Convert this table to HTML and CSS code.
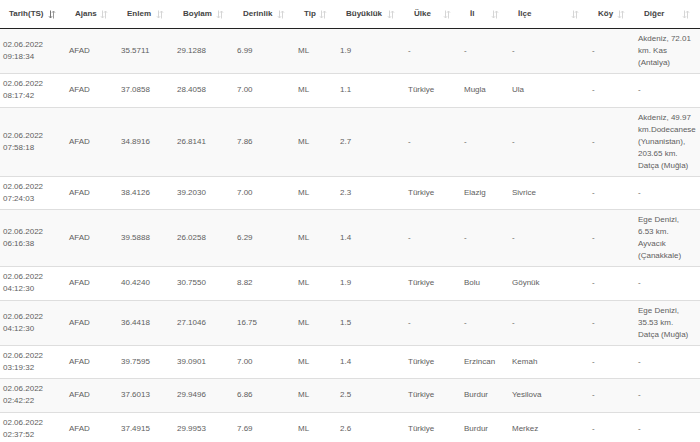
FILE: index.html
```html
<!DOCTYPE html>
<html lang="tr">
<head>
<meta charset="utf-8">
<title>Son Depremler</title>
<link rel="stylesheet" href="styles.css">
</head>
<body>
<table class="quakes">
  <colgroup>
    <col class="c-date"><col class="c-agency"><col class="c-lat"><col class="c-lon">
    <col class="c-depth"><col class="c-type"><col class="c-mag"><col class="c-country">
    <col class="c-city"><col class="c-district"><col class="c-village"><col class="c-other">
  </colgroup>
  <thead>
    <tr>
      <th><span class="th-in"><span>Tarih(TS)</span><svg class="sort sort-active" viewBox="0 0 8 9" width="8" height="9"><path class="a-down" d="M2.5 0.5V8M1 6.3L2.5 8L4 6.3"/><path class="a-up" d="M5.5 8.5V1M4 2.7L5.5 1L7 2.7"/></svg></span></th>
      <th><span class="th-in"><span>Ajans</span><svg class="sort" viewBox="0 0 8 9" width="8" height="9"><path class="a-down" d="M2.5 0.5V8M1 6.3L2.5 8L4 6.3"/><path class="a-up" d="M5.5 8.5V1M4 2.7L5.5 1L7 2.7"/></svg></span></th>
      <th><span class="th-in"><span>Enlem</span><svg class="sort" viewBox="0 0 8 9" width="8" height="9"><path class="a-down" d="M2.5 0.5V8M1 6.3L2.5 8L4 6.3"/><path class="a-up" d="M5.5 8.5V1M4 2.7L5.5 1L7 2.7"/></svg></span></th>
      <th><span class="th-in"><span>Boylam</span><svg class="sort" viewBox="0 0 8 9" width="8" height="9"><path class="a-down" d="M2.5 0.5V8M1 6.3L2.5 8L4 6.3"/><path class="a-up" d="M5.5 8.5V1M4 2.7L5.5 1L7 2.7"/></svg></span></th>
      <th><span class="th-in"><span>Derinlik</span><svg class="sort" viewBox="0 0 8 9" width="8" height="9"><path class="a-down" d="M2.5 0.5V8M1 6.3L2.5 8L4 6.3"/><path class="a-up" d="M5.5 8.5V1M4 2.7L5.5 1L7 2.7"/></svg></span></th>
      <th><span class="th-in"><span>Tip</span><svg class="sort" viewBox="0 0 8 9" width="8" height="9"><path class="a-down" d="M2.5 0.5V8M1 6.3L2.5 8L4 6.3"/><path class="a-up" d="M5.5 8.5V1M4 2.7L5.5 1L7 2.7"/></svg></span></th>
      <th><span class="th-in"><span>Büyüklük</span><svg class="sort" viewBox="0 0 8 9" width="8" height="9"><path class="a-down" d="M2.5 0.5V8M1 6.3L2.5 8L4 6.3"/><path class="a-up" d="M5.5 8.5V1M4 2.7L5.5 1L7 2.7"/></svg></span></th>
      <th><span class="th-in"><span>Ülke</span><svg class="sort" viewBox="0 0 8 9" width="8" height="9"><path class="a-down" d="M2.5 0.5V8M1 6.3L2.5 8L4 6.3"/><path class="a-up" d="M5.5 8.5V1M4 2.7L5.5 1L7 2.7"/></svg></span></th>
      <th><span class="th-in"><span>İl</span><svg class="sort" viewBox="0 0 8 9" width="8" height="9"><path class="a-down" d="M2.5 0.5V8M1 6.3L2.5 8L4 6.3"/><path class="a-up" d="M5.5 8.5V1M4 2.7L5.5 1L7 2.7"/></svg></span></th>
      <th><span class="th-in"><span>İlçe</span><svg class="sort" viewBox="0 0 8 9" width="8" height="9"><path class="a-down" d="M2.5 0.5V8M1 6.3L2.5 8L4 6.3"/><path class="a-up" d="M5.5 8.5V1M4 2.7L5.5 1L7 2.7"/></svg></span></th>
      <th><span class="th-in"><span>Köy</span><svg class="sort" viewBox="0 0 8 9" width="8" height="9"><path class="a-down" d="M2.5 0.5V8M1 6.3L2.5 8L4 6.3"/><path class="a-up" d="M5.5 8.5V1M4 2.7L5.5 1L7 2.7"/></svg></span></th>
      <th><span class="th-in"><span>Diğer</span><svg class="sort" viewBox="0 0 8 9" width="8" height="9"><path class="a-down" d="M2.5 0.5V8M1 6.3L2.5 8L4 6.3"/><path class="a-up" d="M5.5 8.5V1M4 2.7L5.5 1L7 2.7"/></svg></span></th>
    </tr>
  </thead>
  <tbody>
    <tr><td>02.06.2022 09:18:34</td><td>AFAD</td><td>35.5711</td><td>29.1288</td><td>6.99</td><td>ML</td><td>1.9</td><td>-</td><td>-</td><td>-</td><td>-</td><td>Akdeniz, 72.01 km. Kas (Antalya)</td></tr>
    <tr><td>02.06.2022 08:17:42</td><td>AFAD</td><td>37.0858</td><td>28.4058</td><td>7.00</td><td>ML</td><td>1.1</td><td>Türkiye</td><td>Mugla</td><td>Ula</td><td>-</td><td>-</td></tr>
    <tr><td>02.06.2022 07:58:18</td><td>AFAD</td><td>34.8916</td><td>26.8141</td><td>7.86</td><td>ML</td><td>2.7</td><td>-</td><td>-</td><td>-</td><td>-</td><td>Akdeniz, 49.97 km.Dodecanese (Yunanistan), 203.65 km. Datça (Muğla)</td></tr>
    <tr><td>02.06.2022 07:24:03</td><td>AFAD</td><td>38.4126</td><td>39.2030</td><td>7.00</td><td>ML</td><td>2.3</td><td>Türkiye</td><td>Elazig</td><td>Sivrice</td><td>-</td><td>-</td></tr>
    <tr><td>02.06.2022 06:16:38</td><td>AFAD</td><td>39.5888</td><td>26.0258</td><td>6.29</td><td>ML</td><td>1.4</td><td>-</td><td>-</td><td>-</td><td>-</td><td>Ege Denizi, 6.53 km. Ayvacık (Çanakkale)</td></tr>
    <tr><td>02.06.2022 04:12:30</td><td>AFAD</td><td>40.4240</td><td>30.7550</td><td>8.82</td><td>ML</td><td>1.9</td><td>Türkiye</td><td>Bolu</td><td>Göynük</td><td>-</td><td>-</td></tr>
    <tr><td>02.06.2022 04:12:30</td><td>AFAD</td><td>36.4418</td><td>27.1046</td><td>16.75</td><td>ML</td><td>1.5</td><td>-</td><td>-</td><td>-</td><td>-</td><td>Ege Denizi, 35.53 km. Datça (Muğla)</td></tr>
    <tr><td>02.06.2022 03:19:32</td><td>AFAD</td><td>39.7595</td><td>39.0901</td><td>7.00</td><td>ML</td><td>1.4</td><td>Türkiye</td><td>Erzincan</td><td>Kemah</td><td>-</td><td>-</td></tr>
    <tr><td>02.06.2022 02:42:22</td><td>AFAD</td><td>37.6013</td><td>29.9496</td><td>6.86</td><td>ML</td><td>2.5</td><td>Türkiye</td><td>Burdur</td><td>Yesilova</td><td>-</td><td>-</td></tr>
    <tr><td>02.06.2022 02:37:52</td><td>AFAD</td><td>37.4915</td><td>29.9953</td><td>7.69</td><td>ML</td><td>2.6</td><td>Türkiye</td><td>Burdur</td><td>Merkez</td><td>-</td><td>-</td></tr>
  </tbody>
</table>
</body>
</html>
```
FILE: styles.css
```css
html, body {
  margin: 0;
  padding: 0;
  background: #fff;
}

body {
  font-family: "Liberation Sans", Arial, sans-serif;
  font-size: 8px;
  line-height: 12px;
  color: #5e5e5e;
}

.quakes {
  width: 700px;
  table-layout: fixed;
  border-collapse: collapse;
}

.c-date { width: 66px; }
.c-agency { width: 52px; }
.c-lat { width: 56px; }
.c-lon { width: 60px; }
.c-depth { width: 61px; }
.c-type { width: 42px; }
.c-mag { width: 68px; }
.c-country { width: 56px; }
.c-city { width: 48px; }
.c-district { width: 80px; }
.c-village { width: 46px; }
.c-other { width: 65px; }

.quakes th {
  padding: 8px 10px 8px 9px;
  text-align: left;
  font-weight: bold;
  color: #444;
  border-bottom: 1px solid #222;
  white-space: nowrap;
}

.th-in {
  display: flex;
  align-items: center;
}

.sort {
  margin-left: auto;
  flex: none;
  fill: none;
  stroke-width: 1;
}

.sort path {
  stroke: #d6d6d6;
}

.sort-active .a-down {
  stroke: #777;
}

.sort-active .a-up {
  stroke: #999;
}

.quakes td {
  padding: 4px 4px 4.3px 3px;
  vertical-align: middle;
  border-top: 1px solid #dedede;
}

.quakes tbody tr:first-child td {
  border-top: none;
}

.quakes tbody tr:nth-child(odd) {
  background: #f9f9f9;
}
```
